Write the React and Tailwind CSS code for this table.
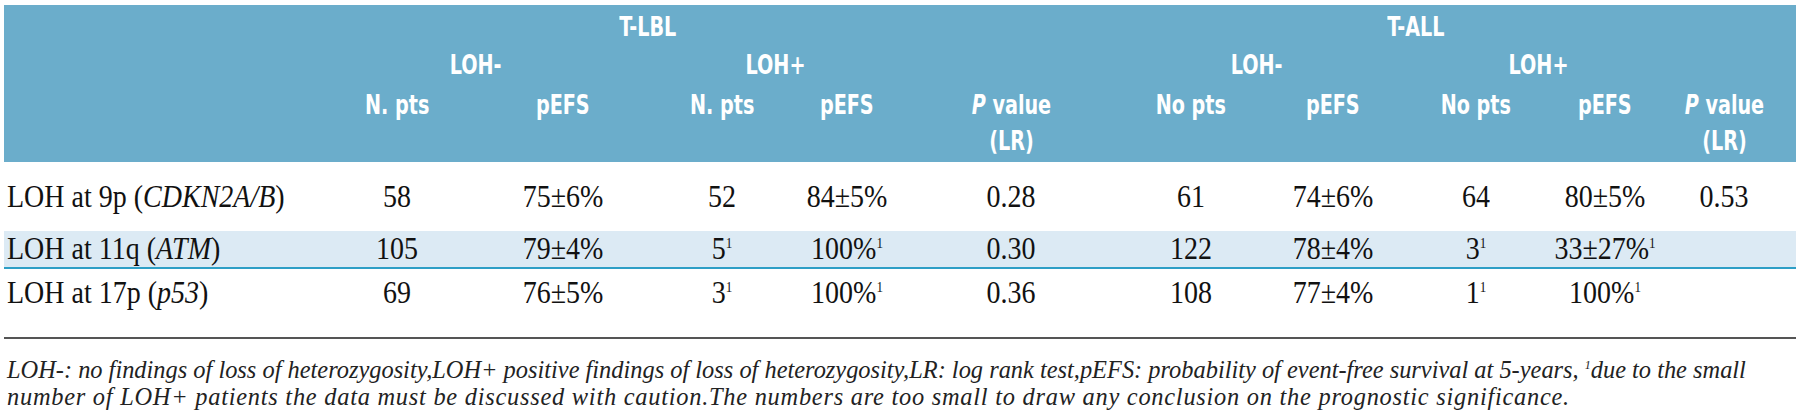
import React from 'react';

const cols =
  'grid grid-cols-[310px_166px_166px_152px_98px_230px_130px_154px_132px_126px_112px]';

const rows = [
  {
    label: 'LOH at 9p (',
    gene: 'CDKN2A/B',
    cells: ['58', '75±6%', '52', '84±5%', '0.28', '61', '74±6%', '64', '80±5%', '0.53'],
  },
  {
    label: 'LOH at 11q (',
    gene: 'ATM',
    cells: ['105', '79±4%', '5¹', '100%¹', '0.30', '122', '78±4%', '3¹', '33±27%¹', ''],
    shaded: true,
  },
  {
    label: 'LOH at 17p (',
    gene: 'p53',
    cells: ['69', '76±5%', '3¹', '100%¹', '0.36', '108', '77±4%', '1¹', '100%¹', ''],
  },
];

// condensed look for the header labels
function H({ children }) {
  return <span className="inline-block scale-x-[0.82]">{children}</span>;
}

function Cell({ value }) {
  const note = value.endsWith('¹');
  return (
    <div className="text-center">
      <span className="inline-block scale-y-[1.1]">
        {note ? value.slice(0, -1) : value}
        {note && <sup className="text-[13px] top-[-10px]">1</sup>}
      </span>
    </div>
  );
}

function PValue() {
  return (
    <H>
      <i>P</i> value
      <br />
      (LR)
    </H>
  );
}

export default function App() {
  const head = "font-['Liberation_Sans_Narrow','DejaVu_Sans_Condensed','Liberation_Sans',sans-serif] font-bold text-white text-[26px]";
  const serif = "font-['Liberation_Serif',serif]";

  return (
    <div className="min-h-screen bg-white pl-[4px] w-[1796px]">
      {/* header band */}
      <div className={`${cols} ${head} mt-[5px] h-[157px] bg-[#6badcb] pt-[3px] grid-rows-[38px_41px_auto] leading-[38px]`}>
        <div className="row-start-1 col-start-2 col-span-5 text-center pr-[144px]"><H>T-LBL</H></div>
        <div className="row-start-1 col-start-7 col-span-5 text-center pr-[74px]"><H>T-ALL</H></div>

        <div className="row-start-2 col-start-2 col-span-2 text-center pr-[8px]"><H>LOH-</H></div>
        <div className="row-start-2 col-start-4 col-span-2 text-center pl-[10px]"><H>LOH+</H></div>
        <div className="row-start-2 col-start-7 col-span-2 text-center pr-[22px]"><H>LOH-</H></div>
        <div className="row-start-2 col-start-9 col-span-2 text-center"><H>LOH+</H></div>

        <div className="row-start-3 col-start-2 text-center leading-[36px]"><H>N. pts</H></div>
        <div className="row-start-3 col-start-3 text-center leading-[36px]"><H>pEFS</H></div>
        <div className="row-start-3 col-start-4 text-center leading-[36px]"><H>N. pts</H></div>
        <div className="row-start-3 col-start-5 text-center leading-[36px]"><H>pEFS</H></div>
        <div className="row-start-3 col-start-6 text-center leading-[36px]"><PValue /></div>
        <div className="row-start-3 col-start-7 text-center leading-[36px]"><H>No pts</H></div>
        <div className="row-start-3 col-start-8 text-center leading-[36px]"><H>pEFS</H></div>
        <div className="row-start-3 col-start-9 text-center leading-[36px]"><H>No pts</H></div>
        <div className="row-start-3 col-start-10 text-center leading-[36px]"><H>pEFS</H></div>
        <div className="row-start-3 col-start-11 text-center leading-[36px]"><PValue /></div>
      </div>

      {/* body */}
      <div className={`${serif} text-[28px] leading-[36px] text-[#111]`}>
        {rows.map((r, i) => (
          <div
            key={i}
            className={`${cols} ${
              i === 0
                ? 'h-[69px] pt-[17px]'
                : r.shaded
                ? 'h-[38px] bg-[#dceaf4] border-b-2 border-[#2e9fc6]'
                : 'pt-[6px] pb-[26px]'
            }`}
          >
            <div className="pl-[3px] whitespace-nowrap">
              <span className="inline-block scale-y-[1.1] origin-left">
                {r.label}
                <i>{r.gene}</i>)
              </span>
            </div>
            {r.cells.map((c, j) => (
              <Cell key={j} value={c} />
            ))}
          </div>
        ))}
      </div>

      {/* footnote */}
      <div className="border-t-2 border-[#555]">
        <p className={`${serif} italic text-[24.4px] leading-[27px] text-[#222] pt-[17px] pl-[3px] whitespace-nowrap`}>
          LOH-: no findings of loss of heterozygosity,LOH+ positive findings of loss of heterozygosity,LR: log rank test,pEFS: probability of event-free survival at 5-years, <sup className="text-[12px] top-[-9px]">1</sup>due to the small
          <br />
          <span className="tracking-[0.75px]">
            number of LOH+ patients the data must be discussed with caution.The numbers are too small to draw any conclusion on the prognostic significance.
          </span>
        </p>
      </div>
    </div>
  );
}
